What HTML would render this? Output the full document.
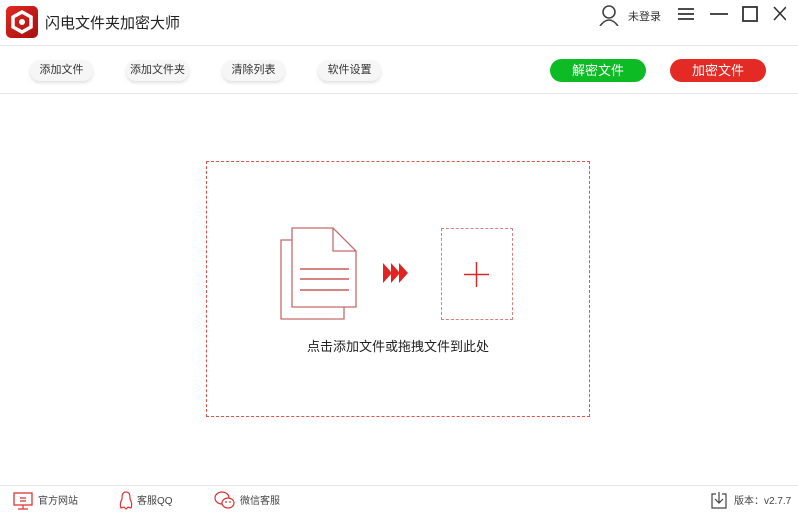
<html><head><style>
body{margin:0;width:798px;height:518px;background:#fff;font-family:"Liberation Sans","Noto Sans CJK SC",sans-serif;position:relative;overflow:hidden;color:#333}
.a{position:absolute}
.tb{position:absolute;top:60px;height:21px;width:63px;border-radius:10px;background:#f6f6f6;box-shadow:0 2px 3px rgba(0,0,0,.12);font-size:11px;text-align:center;line-height:21px;color:#333}
.bt{position:absolute;top:59px;height:23px;width:96px;border-radius:12px;color:#fff;font-size:13px;text-align:center;line-height:23px}
.f{position:absolute;top:492px;font-size:10px;color:#444}
</style></head><body>
<div class="a" style="left:6px;top:6px;width:32px;height:32px;border-radius:5px;background:linear-gradient(135deg,#e02a20,#a50f10)">
<svg width="32" height="32" viewBox="0 0 32 32"><path d="M16 6 L25 11 L25 21 L16 26 L7 21 L7 11 Z" fill="none" stroke="#fff" stroke-width="3.5"/><circle cx="16" cy="16" r="3" fill="#fff"/></svg></div>
<div class="a" style="left:45px;top:12px;font-size:15px;color:#222">闪电文件夹加密大师</div>
<svg class="a" style="left:598px;top:4px" width="22" height="22" viewBox="0 0 22 22"><circle cx="11" cy="8" r="6" fill="none" stroke="#444" stroke-width="1.6"/><path d="M2 22 Q11 10 20 22" fill="none" stroke="#444" stroke-width="1.6"/></svg>
<div class="a" style="left:628px;top:8px;font-size:11px;color:#333">未登录</div>
<svg class="a" style="left:676px;top:5px;" width="110" height="20" viewBox="0 0 110 20"><path d="M2 4H18M2 9H18M2 14H18" stroke="#333" stroke-width="1.8"/><path d="M34 9H52" stroke="#333" stroke-width="1.8"/><rect x="67" y="2" width="14" height="14" fill="none" stroke="#333" stroke-width="1.8"/><path d="M98 2L110 15M110 2L98 15" stroke="#333" stroke-width="1.6"/></svg>
<div class="a" style="left:0;top:45px;width:798px;height:1px;background:#e4e4e4"></div>
<div class="tb" style="left:30px">添加文件</div>
<div class="tb" style="left:126px">添加文件夹</div>
<div class="tb" style="left:222px">清除列表</div>
<div class="tb" style="left:318px">软件设置</div>
<div class="bt" style="left:550px;background:#0dbb25">解密文件</div>
<div class="bt" style="left:670px;background:#e42a24">加密文件</div>
<div class="a" style="left:0;top:93px;width:798px;height:1px;background:#e4e4e4"></div>
<div class="a" style="left:206px;top:161px;width:382px;height:254px;border:1px dashed #d9534f"></div>
<svg class="a" style="left:278px;top:226px" width="82" height="96" viewBox="0 0 82 96"><path d="M14 14H3V93H66V81" fill="none" stroke="#c76b6b" stroke-width="1.3"/><path d="M14 2H55L78 25V81H14Z" fill="#fff" stroke="#c76b6b" stroke-width="1.3"/><path d="M55 2V25H78" fill="none" stroke="#c76b6b" stroke-width="1.3"/><path d="M22 43H71M22 53H71M22 64H71" stroke="#c0393b" stroke-width="1.3"/></svg>
<svg class="a" style="left:383px;top:263px" width="27" height="20" viewBox="0 0 27 20"><path d="M0 0L9 10L0 20ZM8 0L17 10L8 20ZM16 0L25 10L16 20Z" fill="#e02424"/></svg>
<div class="a" style="left:441px;top:228px;width:70px;height:90px;border:1px dashed #d98080"></div>
<svg class="a" style="left:464px;top:262px" width="25" height="25"><path d="M12.5 0V25M0 12.5H25" stroke="#d42a2a" stroke-width="1.5"/></svg>
<div class="a" style="left:206px;width:384px;top:336px;text-align:center;font-size:13px;color:#222">点击添加文件或拖拽文件到此处</div>
<div class="a" style="left:0;top:485px;width:798px;height:1px;background:#e4e4e4"></div>
<svg class="a" style="left:13px;top:492px" width="20" height="18" viewBox="0 0 20 18"><rect x="1" y="1" width="18" height="12" fill="none" stroke="#d33" stroke-width="1.3"/><path d="M7 6H13M7 9H13M10 13V17M5 17H15" stroke="#d33" stroke-width="1.2"/></svg>
<div class="f" style="left:38px">官方网站</div>
<svg class="a" style="left:119px;top:491px" width="14" height="19" viewBox="0 0 14 19"><path d="M7 1C3 1 3 5 3 8C1 11 1 15 2 17L5 16L7 18L9 16L12 17C13 15 13 11 11 8C11 5 11 1 7 1Z" fill="none" stroke="#d33" stroke-width="1.2"/></svg>
<div class="f" style="left:137px">客服QQ</div>
<svg class="a" style="left:214px;top:491px" width="22" height="19" viewBox="0 0 22 19"><ellipse cx="8" cy="7" rx="7" ry="6" fill="none" stroke="#d33" stroke-width="1.2"/><ellipse cx="14" cy="12" rx="6" ry="5" fill="#fff" stroke="#d33" stroke-width="1.2"/><circle cx="12" cy="11" r=".9" fill="#d33"/><circle cx="16" cy="11" r=".9" fill="#d33"/></svg>
<div class="f" style="left:240px">微信客服</div>
<svg class="a" style="left:711px;top:491px" width="16" height="18" viewBox="0 0 16 18"><path d="M5 3H1V17H15V3H11M8 1V12M4 8L8 12L12 8" fill="none" stroke="#444" stroke-width="1.2"/></svg>
<div class="f" style="left:734px">版本：v2.7.7</div>
</body></html>
